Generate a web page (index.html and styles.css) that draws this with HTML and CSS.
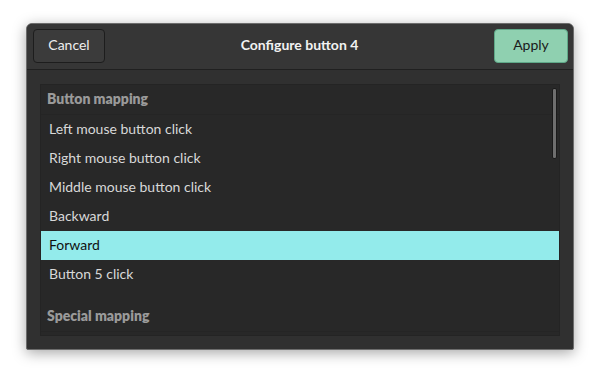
FILE: index.html
```html
<!DOCTYPE html>
<html>
<head>
<meta charset="utf-8">
<link rel="stylesheet" href="styles.css">
</head>
<body>
<div class="dialog">
  <div class="header">
    <button class="btn cancel">Cancel</button>
    <div class="title">Configure button 4</div>
    <button class="btn apply">Apply</button>
  </div>
  <div class="body">
    <div class="list">
      <div class="section">Button mapping</div>
      <div class="row">Left mouse button click</div>
      <div class="row">Right mouse button click</div>
      <div class="row">Middle mouse button click</div>
      <div class="row">Backward</div>
      <div class="row selected">Forward</div>
      <div class="row">Button 5 click</div>
      <div class="section second">Special mapping</div>
      <div class="scrollbar"></div>
    </div>
  </div>
</div>
</body>
</html>
```
FILE: styles.css
```css
html, body {
  margin: 0;
  padding: 0;
  background: #ffffff;
  width: 600px;
  height: 379px;
  overflow: hidden;
}
body {
  padding: 23px 26px 0 26px;
  box-sizing: border-box;
  font-family: "Lato", "Noto Sans", sans-serif;
}
.dialog {
  width: 548px;
  height: 327px;
  box-sizing: border-box;
  border: 1px solid #6c6c6c;
  border-radius: 6px 6px 2px 2px;
  background: #303030;
  box-shadow: 0 3px 14px rgba(0,0,0,0.35);
  display: flex;
  flex-direction: column;
  overflow: hidden;
}
.header {
  height: 46px;
  box-sizing: border-box;
  background: #363636;
  border-bottom: 1px solid #202020;
  display: flex;
  align-items: center;
  justify-content: space-between;
  padding: 0 5px 1px 6px;
}
.btn {
  height: 34px;
  box-sizing: border-box;
  border-radius: 4px;
  font-family: inherit;
  font-size: 14px;
  padding: 0 0 3px 0;
}
.cancel {
  width: 72px;
  background: #3b3b3b;
  border: 1px solid #1d1d1d;
  color: #eeeeee;
}
.apply {
  width: 74px;
  background: #8fd0b0;
  border: 1px solid #5fa888;
  color: #1a1a1a;
}
.title {
  color: #f2f2f2;
  font-weight: bold;
  font-size: 14px;
  padding-bottom: 3px;
}
.body {
  flex: 1;
  padding: 14px 13px 13px 13px;
  display: flex;
}
.list {
  position: relative;
  flex: 1;
  background: #282828;
  border: 1px solid #242424;
  overflow: hidden;
}
.section {
  height: 29px;
  line-height: 27px;
  padding-left: 6px;
  font-size: 14px;
  font-weight: 800;
  color: #9a9a9a;
  border-bottom: 1px solid #252525;
}
.section.second {
  margin-top: 13px;
}
.row {
  height: 29px;
  line-height: 27px;
  padding-left: 8px;
  font-size: 14px;
  color: #d8d8d8;
}
.row.selected {
  background: #93ebeb;
  color: #111111;
}
.scrollbar {
  position: absolute;
  right: 2px;
  top: 3px;
  width: 3px;
  height: 69px;
  background: #6e6e6e;
  border: 1px solid #1a1a1a;
  border-radius: 2px;
}
```
